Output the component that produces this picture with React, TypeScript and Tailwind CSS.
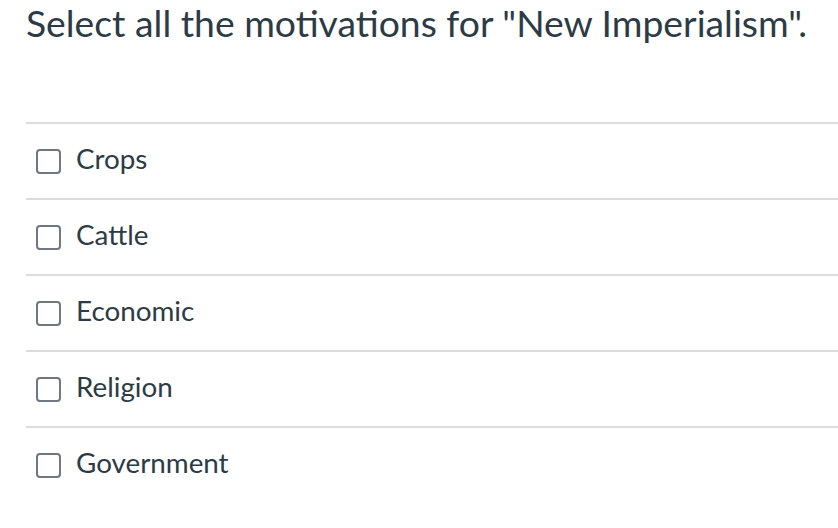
import React from "react";

const options = ["Crops", "Cattle", "Economic", "Religion", "Government"];

export default function App() {
  return (
    <div className="w-[838px] h-[528px] bg-white overflow-hidden pl-[26px] text-[#2d3b45]" style={{ fontFamily: "Lato, 'Open Sans', sans-serif" }}>
      <h1 className="text-[37.3px] leading-[46px] m-0 font-normal">Select all the motivations for "New Imperialism".</h1>
      <div className="mt-[76px]">
        {options.map((o) => (
          <div key={o} className="border-t-2 border-[#dcdcdc] h-[76px] flex items-center pl-[10px]">
            <div className="w-[25px] h-[25px] border-2 border-[#6f7780] rounded-[4px] shrink-0" />
            <span className="ml-[15px] text-[27.8px] leading-none -mt-[5px]">{o}</span>
          </div>
        ))}
      </div>
    </div>
  );
}
